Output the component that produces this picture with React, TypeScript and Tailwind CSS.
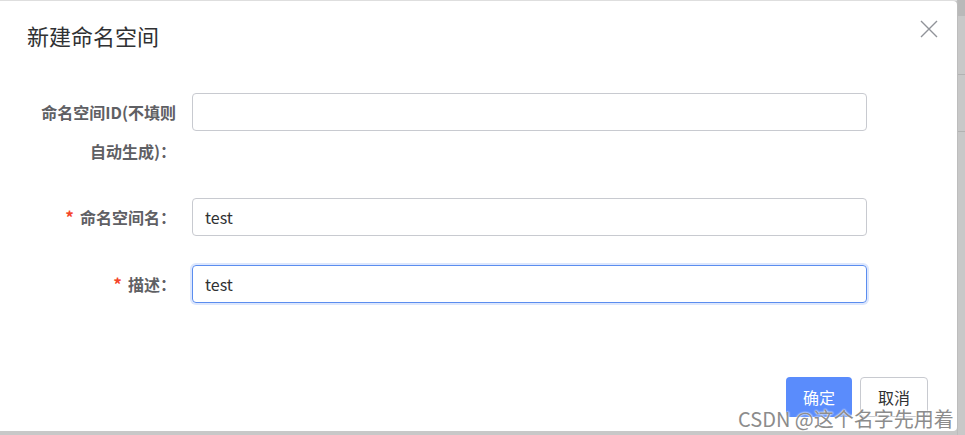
import React from 'react';

const font = { fontFamily: '"Noto Sans CJK SC", "Noto Sans", sans-serif' };

const Label: React.FC<{ required?: boolean; children: React.ReactNode; tall?: boolean }> = ({
  required,
  children,
  tall,
}) => (
  <label
    className={`w-[176px] shrink-0 text-right text-[16px] font-bold text-[#5f6064] ${
      tall ? 'leading-[39px]' : 'leading-[38px]'
    }`}
  >
    {required && <span className="text-[#f5452a] text-[17px] mr-[6px]">*</span>}
    {children}
  </label>
);

export default function App() {
  return (
    <div className="w-[965px] h-[435px] bg-[#c8c8c8] flex overflow-hidden relative" style={font}>
      <div className="w-[957px] h-[430px] mt-px bg-white rounded-r-[4px] relative flex flex-col">
        {/* header */}
        <div className="flex items-start justify-between pl-[27px] pr-[19px] pt-[19px]">
          <h2 className="text-[22px] leading-[30px] text-[#303133]">新建命名空间</h2>
          <button className="w-[18px] h-[18px] text-[#909399]">
            <svg viewBox="0 0 18 18" width="18" height="18" fill="none" stroke="currentColor" strokeWidth="1.4">
              <path d="M1 1 L17 17 M17 1 L1 17" />
            </svg>
          </button>
        </div>

        {/* form */}
        <div className="flex flex-col mt-[43px]">
          <div className="flex items-start">
            <Label tall>
              命名空间ID(不填则
              <br />
              自动生成)：
            </Label>
            <input
              className="ml-[16px] w-[675px] h-[38px] border border-[#c8cad0] rounded-[4px] px-[12px] text-[16px] text-[#303133] outline-none"
              defaultValue=""
            />
          </div>
          <div className="flex items-start mt-[27px]">
            <Label required>命名空间名：</Label>
            <input
              className="ml-[16px] w-[675px] h-[38px] border border-[#c8cad0] rounded-[4px] px-[12px] text-[16px] text-[#303133] outline-none"
              defaultValue="test"
            />
          </div>
          <div className="flex items-start mt-[29px]">
            <Label required>描述：</Label>
            <input
              className="ml-[16px] w-[675px] h-[38px] border border-[#5b8def] rounded-[4px] px-[12px] text-[16px] text-[#303133] outline-none shadow-[0_0_0_2px_#dde7fd]"
              defaultValue="test"
            />
          </div>
        </div>

        {/* footer */}
        <div className="flex justify-end gap-[8px] pr-[29px] mt-[74px]">
          <button className="w-[66px] h-[40px] rounded-[4px] bg-[#5a8cfc] text-white text-[16px]">确定</button>
          <button className="w-[68px] h-[40px] rounded-[4px] border border-[#c8cad0] bg-white text-[#303133] text-[16px]">
            取消
          </button>
        </div>

        {/* watermark */}
        <div className="absolute left-[738px] top-[403px] text-[20px] leading-[30px] text-[#8c8c8c] [text-shadow:0_0_2px_#fff,0_0_2px_#fff]">
          CSDN @这个名字先用着
        </div>
      </div>

      {/* backdrop strip */}
      <div className="flex-1 flex flex-col border-l border-[#bdbdbd]">
        <div className="h-[16px] bg-[#b9b9b9]" />
        <div className="h-[59px] border-b border-[#b2b2b2]" />
        <div className="h-[57px] border-b border-[#b2b2b2]" />
        <div className="flex-1" />
      </div>
      <div className="absolute left-0 top-0 w-[957px] h-px bg-[#dedede]" />
    </div>
  );
}
